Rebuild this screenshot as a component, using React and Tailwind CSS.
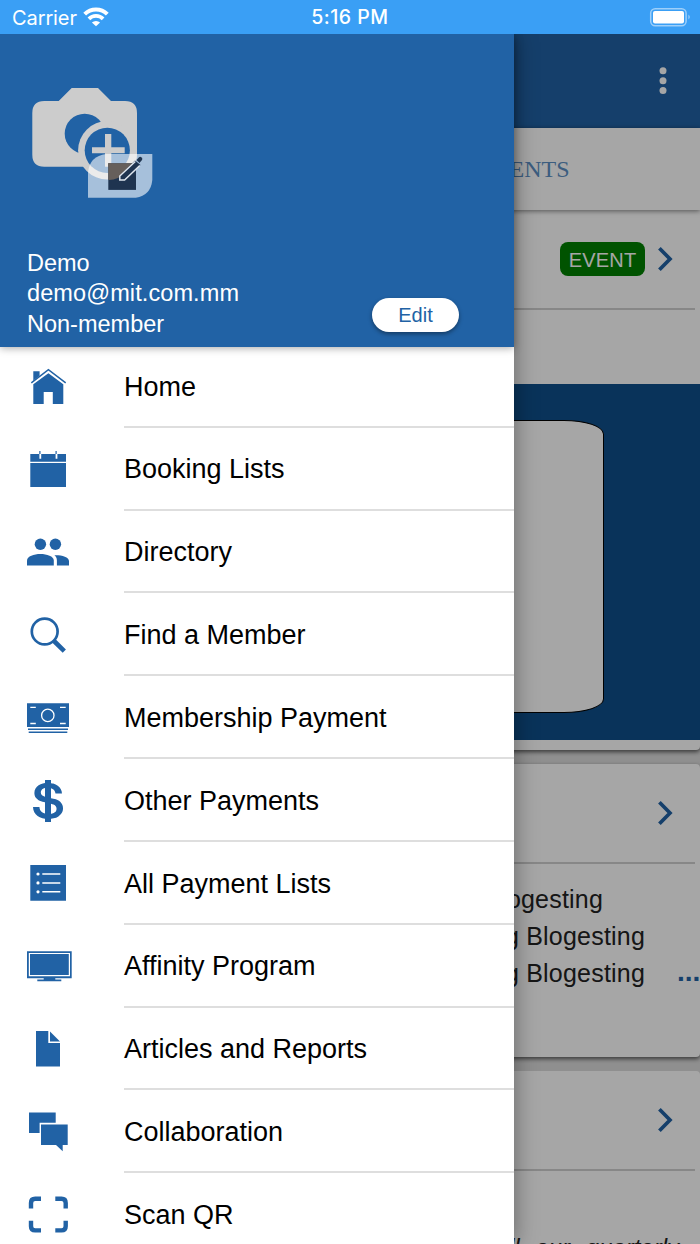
import React from 'react';
import { IoLogoUsd } from 'react-icons/io';

const Svg = ({ children }) => (
  <svg viewBox="0 0 48 48" className="w-12 h-12 shrink-0" fill="currentColor">{children}</svg>
);

const HomeIcon = () => (
  <Svg>
    <path d="M9.3 9.3h6.3v6L9.3 20z" />
    <path d="M7.5 22 24.4 9 41.5 22" fill="none" stroke="#fff" strokeWidth="3" />
    <path d="M7.3 20.9 24.4 7.7 41.7 20.9" fill="none" stroke="currentColor" strokeWidth="1.5" />
    <path d="M24.4 11.2 39.3 22.2V42H28.8V30h-9.1v12H9.3V22.2z" />
  </Svg>
);

const CalendarIcon = () => (
  <Svg>
    <path d="M6.3 9H42v7.7H6.3zM6.3 18H42v24H6.3z" />
    <path d="M16.3 7v6.7M32.5 7v6.7" stroke="#fff" strokeWidth="1.8" />
    <path d="M15.9 6v3M32.1 6v3" stroke="currentColor" strokeWidth="1.2" />
  </Svg>
);

const PeopleIcon = () => (
  <Svg>
    <circle cx="16.4" cy="16.3" r="5.7" />
    <circle cx="31.4" cy="16.3" r="5.7" />
    <path d="M3 37.500v-5c0-4.200 7-6.500 13.400-6.500S29.800 28.300 29.800 32.500v5z" />
    <path d="M30.400 27.300c7-.3 14.600 1.700 14.600 5.800v4.400H32.900v-5c0-2.300-.8-3.800-2.500-5.200z" />
  </Svg>
);

const SearchIcon = () => (
  <Svg>
    <circle cx="20.700" cy="20.500" r="12.900" fill="none" stroke="currentColor" strokeWidth="2.700" />
    <path d="M29.500 29.500 40.300 40.100" stroke="currentColor" strokeWidth="4.600" />
  </Svg>
);

const CashIcon = () => (
  <Svg>
    <path d="M3 9.300h42v23.800H3zM4 34.600h40v1.500H4zM4.700 37.600h38.600v1.500H4.700z" />
    <circle cx="23.800" cy="21.400" r="6.200" fill="none" stroke="#fff" strokeWidth="1.300" />
    <path d="M6.300 13.400h5.500M36 13.400h5.700M6.300 29.500h5.500M36 29.500h5.700" stroke="#fff" strokeWidth="1.300" />
  </Svg>
);

const DollarIcon = () => <IoLogoUsd className="w-12 h-12 shrink-0" />;

const ListIcon = () => (
  <Svg>
    <path d="M6.300 6H42v35.700H6.300z" />
    <g fill="#fff">
      <circle cx="14" cy="15" r="1.600" />
      <circle cx="14" cy="23.900" r="1.600" />
      <circle cx="14" cy="32.800" r="1.600" />
    </g>
    <path d="M18.300 15h18M18.300 23.900h18M18.300 32.800h18" stroke="#fff" strokeWidth="1.500" />
  </Svg>
);

const DesktopIcon = () => (
  <Svg>
    <path d="M3 9.200h44.700v27H3z" />
    <path d="M5.400 11.500h40v22.200h-40z" fill="none" stroke="#fff" strokeWidth="1.200" />
    <path d="M19.700 36h11.600v1.600h6v1.600h-24v-1.600h6.400z" />
  </Svg>
);

const DocumentIcon = () => (
  <Svg>
    <path d="M12 6h12.300v11.900H36v23.700H12z" />
    <path d="M26 6.600 36 16.400H26z" />
  </Svg>
);

const ChatIcon = () => (
  <Svg>
    <path d="M5 4.500h26.700v10.300H15.600V25H5z" />
    <path d="M17 16.600h26.700V37h-5v6.200L32 37H17z" />
  </Svg>
);

const ScanIcon = () => (
  <Svg>
    <path
      d="M7 17.500V12q0-4.200 4.200-4.200H17M31.300 7.800h6.200q4.200 0 4.200 4.200v5.500M41.700 29.700v5.500q0 4.200-4.200 4.200h-6.200M17 39.400h-5.800Q7 39.400 7 35.200v-5.500"
      fill="none"
      stroke="currentColor"
      strokeWidth="4.400"
    />
  </Svg>
);

const menuItems = [
  { label: 'Home', icon: HomeIcon },
  { label: 'Booking Lists', icon: CalendarIcon },
  { label: 'Directory', icon: PeopleIcon },
  { label: 'Find a Member', icon: SearchIcon },
  { label: 'Membership Payment', icon: CashIcon },
  { label: 'Other Payments', icon: DollarIcon },
  { label: 'All Payment Lists', icon: ListIcon },
  { label: 'Affinity Program', icon: DesktopIcon },
  { label: 'Articles and Reports', icon: DocumentIcon },
  { label: 'Collaboration', icon: ChatIcon },
  { label: 'Scan QR', icon: ScanIcon },
];

const StatusBar = () => (
  <div className="h-[34px] shrink-0 bg-[#3a9ff5] text-white grid grid-cols-3 items-center pl-3 pr-[9px] font-['Inter',sans-serif]">
    <div className="flex items-center gap-1.5 text-[20px] leading-none">
      <span className="pt-0.5 tracking-[-0.1px]">Carrier</span>
      <svg viewBox="0 0 26 20" className="w-[26px] h-5" fill="none" stroke="currentColor">
        <path d="M1.700 7.200a16 16 0 0 1 22.600 0" strokeWidth="4" />
        <path d="M5.900 11.900a10 10 0 0 1 14.200 0" strokeWidth="3.800" />
        <path d="M13 19.300 8.900 15.600a5.800 5.800 0 0 1 8.200 0z" fill="currentColor" stroke="none" />
      </svg>
    </div>
    <span className="text-center text-[19.500px] leading-none font-medium tracking-[0.500px] pt-0.5 pr-[3px]">
      5:16 PM
    </span>
    <svg viewBox="0 0 42 20" className="w-[42px] h-5 justify-self-end" fill="none">
      <rect x="1.700" y="1.700" width="35.400" height="17" rx="4.500" stroke="#fff" strokeOpacity=".5" strokeWidth="1.500" />
      <rect x="4" y="4" width="31" height="12.400" rx="2" fill="#fff" />
      <path d="M39.500 7.500q2.300 2.500 0 5z" fill="#fff" fillOpacity=".6" />
    </svg>
  </div>
);

const Chevron = () => (
  <svg viewBox="0 0 16 26" className="w-4 h-[26px]" fill="none" stroke="#2162a5" strokeWidth="3.700">
    <path d="M2.400 2.200 13 13 2.400 23.800" />
  </svg>
);

const CardHeader = ({ children }) => (
  <div className="h-[99.500px] mr-[5px] pr-[22px] border-b-2 border-[#d0d0d0] flex items-center justify-end gap-3">
    {children}
    <Chevron />
  </div>
);

const Feed = () => (
  <div className="h-full flex flex-col bg-[#dcdcdc]">
    <header className="h-[94px] shrink-0 bg-[#2162a5] flex items-center justify-end pr-[33.500px]">
      <svg viewBox="0 0 8 28" className="w-2 h-7" fill="#fff">
        <circle cx="4" cy="3.800" r="3.500" />
        <circle cx="4" cy="13.700" r="3.500" />
        <circle cx="4" cy="23.600" r="3.500" />
      </svg>
    </header>
    <nav className="relative h-[82px] shrink-0 bg-white shadow-[0_1px_5px_rgba(0,0,0,0.5)] flex items-center justify-end pr-[130.500px] font-['Liberation_Serif',serif] text-[24px] text-[#5c90c4]">
      EVENTS
    </nav>
    <section className="h-[540px] shrink-0 bg-white rounded-b shadow-[0_2px_4px_rgba(0,0,0,0.6)]">
      <CardHeader>
        <span className="h-[34px] w-[85px] rounded-lg bg-[#008000] text-white text-[20px] tracking-[0.2px] flex items-center justify-center pt-0.5">
          EVENT
        </span>
      </CardHeader>
      <div className="mt-[74.500px] h-[356px] bg-[#0f4f8a] pt-9 pr-24 flex justify-end">
        <div className="w-[400px] h-[293px] bg-white border border-black rounded-[40px/14px]" />
      </div>
    </section>
    <section className="mt-3.5 h-[293px] shrink-0 bg-white rounded shadow-[0_2px_4px_rgba(0,0,0,0.6)]">
      <CardHeader />
      <div className="flex items-end justify-end pt-[17.500px] text-[25px] leading-[37px] text-[#222]">
        <div className="flex flex-col w-[248px] whitespace-nowrap tracking-[0.200px]">
          <p className="self-end pr-[42px]">Blogesting</p>
          <p className="self-end">Blogesting Blogesting</p>
          <p className="self-end">Blogesting Blogesting</p>
        </div>
        <span className="w-[55px] pl-[32px] text-[28px] font-bold text-[#2162a5] mb-0.5">...</span>
      </div>
    </section>
    <section className="mt-3.5 h-[300px] shrink-0 bg-white rounded">
      <CardHeader />
      <p className="pt-[63px] pr-[21px] text-right text-[24px] leading-7 italic [word-spacing:9px] text-[#222]">
        all our quarterly
      </p>
    </section>
  </div>
);

const Avatar = () => (
  <svg viewBox="0 0 124 112" className="w-[124px] h-28" fill="#ccc">
    <path d="M41.700 2H68l13 13h14q12 0 12 12v41.700q0 12-12 12H14.300q-12 0-12-12V27q0-12 12-12h14.400z" />
    <circle cx="54.700" cy="47.700" r="20" fill="#2162a5" />
    <circle cx="77.300" cy="64.300" r="29.200" />
    <circle cx="77.300" cy="64.300" r="22.600" fill="#2162a5" />
    <path d="M75 48h6.300v13.300h13.400v6H81.300v13.400H75V67.300H62v-6h13z" />
    <path d="M76 68h46.300v26q-1.500 15.500-16.500 17.700H58V86q2-16 18-18z" fill="#fff" fillOpacity=".6" />
    <path d="M78.300 77.300H106v26.600H78.300z" fill="#1f3450" />
    <path d="M78.300 77.300H103l-8 9.500q-7 7.500-16.700 7.200z" fill="#665f5b" />
    <path d="M78.300 77.300h3v3.400h-3z" fill="#665f5b" />
    <path d="M89.800 94v-4.400L105 74.500l5.500 4.500-15.300 15z" fill="#1f3450" />
    <path d="M105.300 75.500 89.800 90v4h4.800l15.200-14.500" fill="none" stroke="#dfe6ee" strokeWidth="1.500" />
    <path d="m106.500 74 2.500-2.800q1.200-.8 2.600.2t.4 2.600L109.500 77z" fill="#1f3450" />
  </svg>
);

const Drawer = () => (
  <aside className="absolute left-0 top-0 bottom-0 w-[514px] bg-white shadow-[0_0_22px_rgba(0,0,0,0.4)] flex flex-col">
    <div className="relative h-[313px] shrink-0 bg-[#2162a5] text-white shadow-[0_1px_8px_rgba(0,0,0,0.35)] flex flex-col justify-between pt-[52px] pl-[27px]">
      <div className="pl-[3px]">
        <Avatar />
      </div>
      <div className="flex items-end justify-between pr-[55px] pb-2">
        <div className="text-[23.500px] leading-[30.300px]">
          <p>Demo</p>
          <p className="tracking-[0.100px]">demo@mit.com.mm</p>
          <p>Non-member</p>
        </div>
        <button className="w-[87px] h-[34px] mb-[7.500px] rounded-full bg-white text-[#2162a5] text-[20px] leading-none shadow-[0_2px_4px_rgba(0,0,0,0.4)]">
          Edit
        </button>
      </div>
    </div>
    <ul className="-mt-[2px]">
      {menuItems.map(({ label, icon: Icon }) => (
        <li key={label} className="h-[82.830px] pl-6 flex items-center text-[#2162a5]">
          <Icon />
          <span className="ml-[52px] h-full flex-1 flex items-center border-b-2 border-[#dedede] text-black text-[27px] pt-[3px]">
            {label}
          </span>
        </li>
      ))}
    </ul>
  </aside>
);

const App = () => {
  return (
    <div className="w-[700px] h-[1244px] overflow-hidden flex flex-col font-['Liberation_Sans',Arial,sans-serif]">
      <StatusBar />
      <main className="relative flex-1 min-h-0 overflow-hidden">
        <Feed />
        {/* Backdrop */}
        <div className="absolute inset-0 bg-black/35" />
        <Drawer />
      </main>
    </div>
  );
};

export default App;
